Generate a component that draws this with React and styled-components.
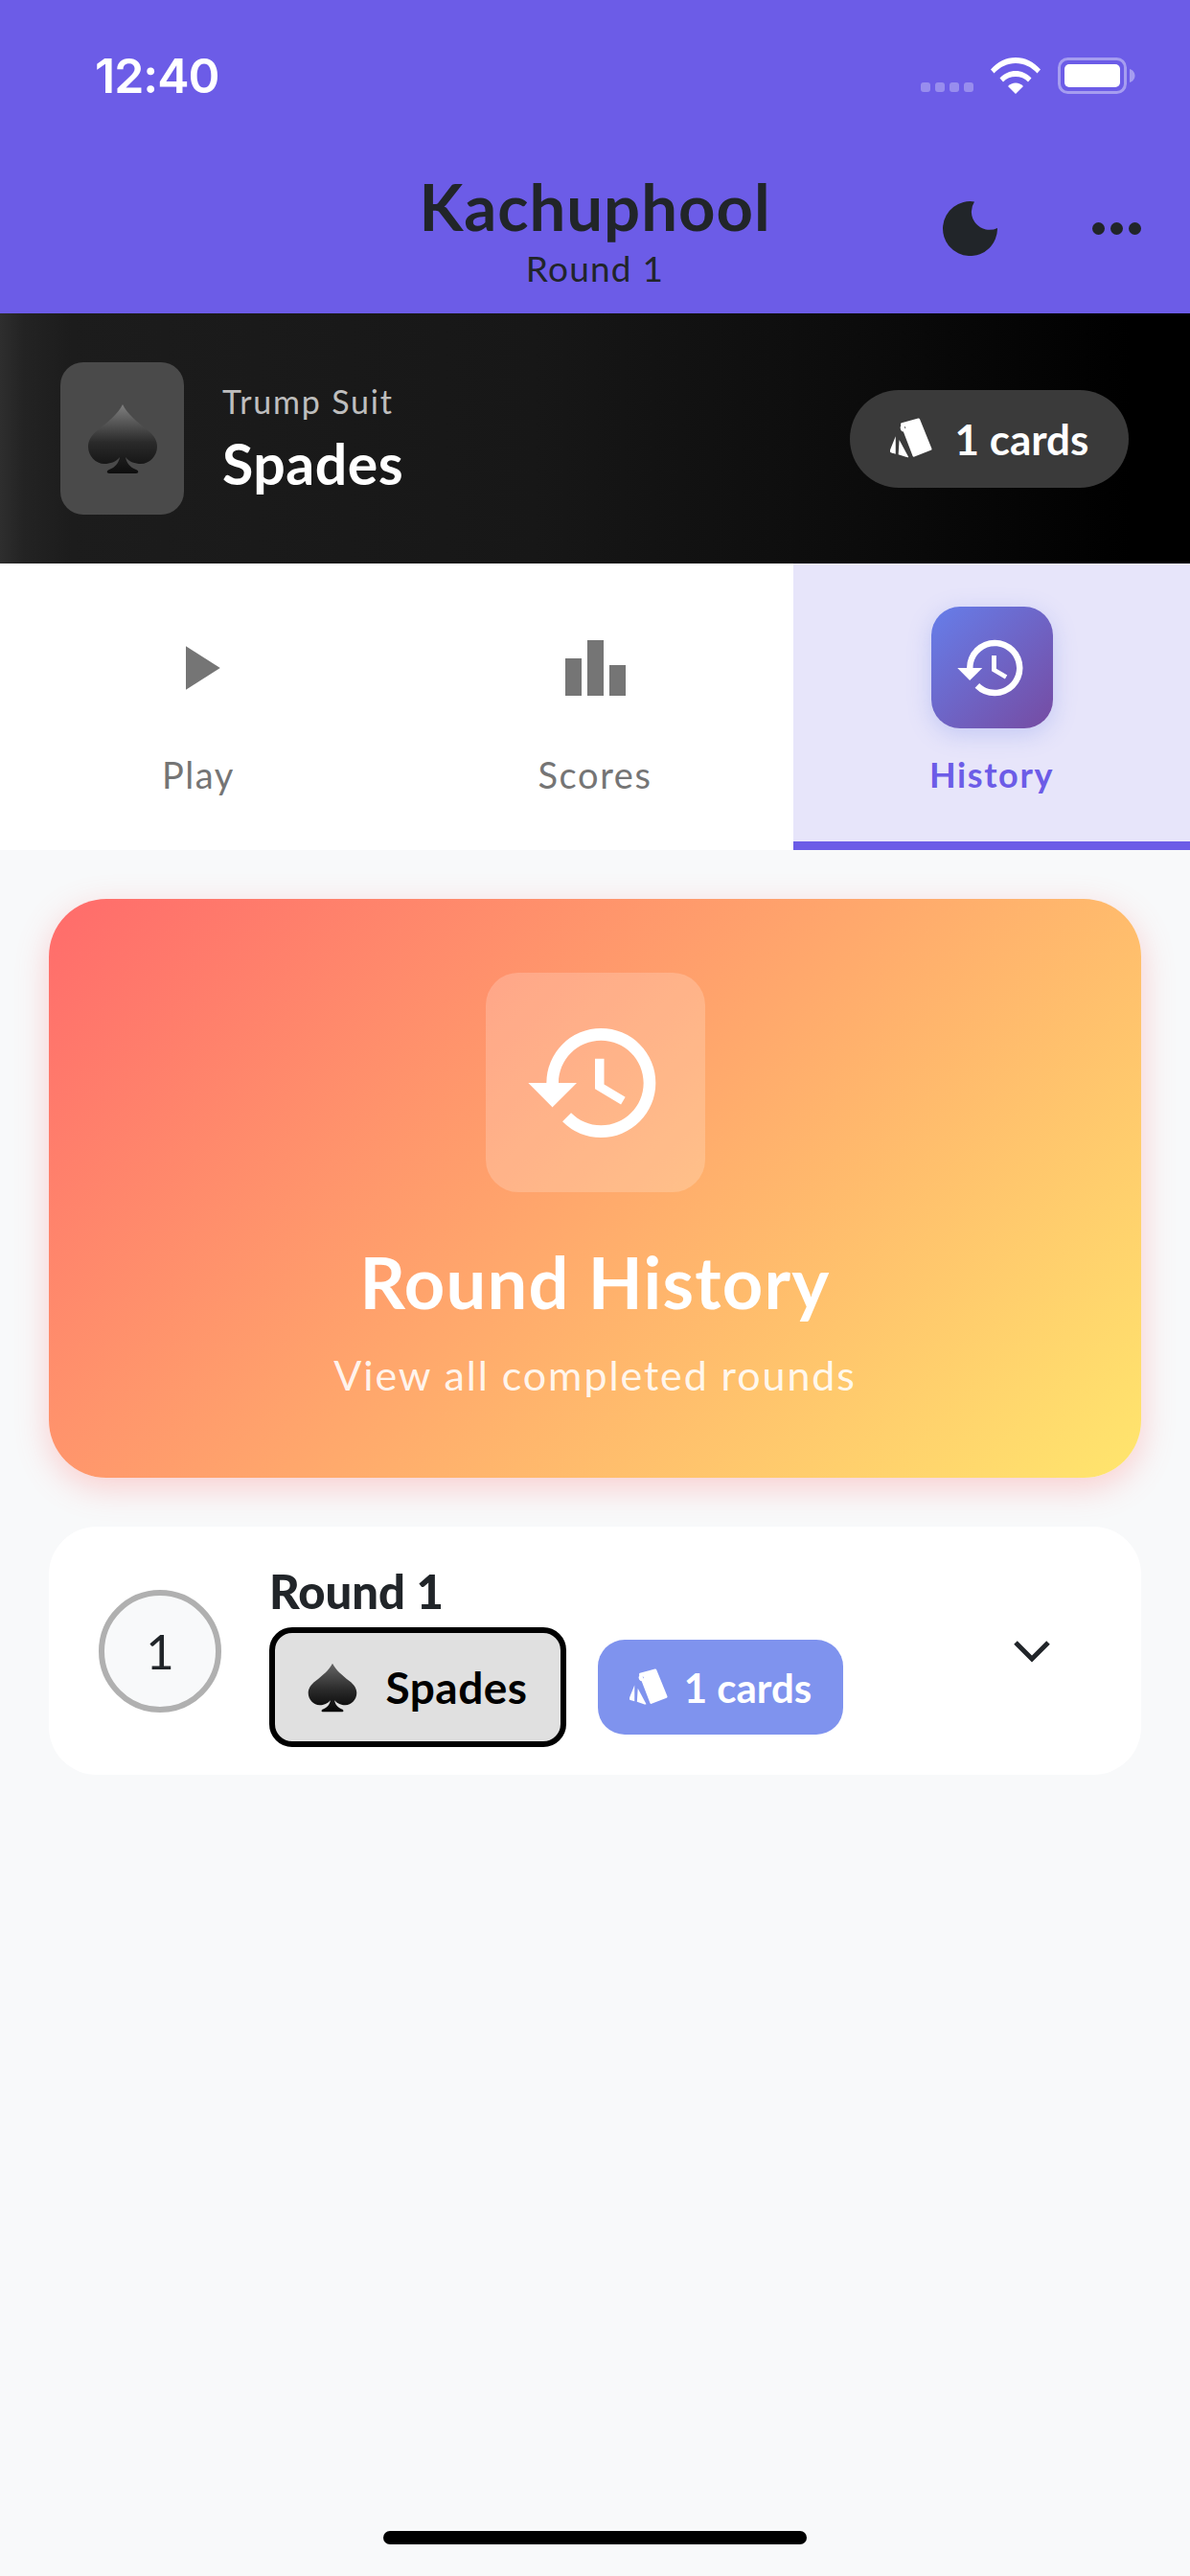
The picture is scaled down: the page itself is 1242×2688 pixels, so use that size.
import React from 'react';
import styled, { createGlobalStyle } from 'styled-components';

const GlobalStyle = createGlobalStyle`
  html, body {
    margin: 0;
    padding: 0;
    background: #f8f9fa;
  }
  * {
    box-sizing: border-box;
  }
`;

const Page = styled.div`
  width: 1242px;
  height: 2688px;
  display: flex;
  flex-direction: column;
  background: #f8f9fa;
  font-family: Lato, "Open Sans", sans-serif;
  overflow: hidden;
`;

const Header = styled.header`
  height: 327px;
  flex-shrink: 0;
  background: #6c5ce7;
`;

const StatusBar = styled.div`
  height: 156px;
  display: flex;
  align-items: center;
  justify-content: space-between;
  padding: 2px 57px 0 99px;
`;

const Time = styled.span`
  font-family: Inter, sans-serif;
  font-size: 50px;
  font-weight: 600;
  letter-spacing: -1px;
  color: #fff;
`;

const StatusIcons = styled.div`
  display: flex;
  align-items: flex-end;
  gap: 18px;
`;

const SignalDots = styled.div`
  display: flex;
  gap: 5px;
  padding-bottom: 2px;
`;

const SignalDot = styled.i`
  display: block;
  width: 10px;
  height: 10px;
  border-radius: 3px;
  background: rgba(255, 255, 255, 0.3);
`;

const AppBar = styled.div`
  height: 171px;
  display: grid;
  grid-template-columns: 1fr auto 1fr;
  align-items: center;
`;

const TitleBlock = styled.div`
  display: flex;
  flex-direction: column;
  align-items: center;
  grid-column: 2;
  margin-top: -6px;
`;

const AppTitle = styled.h1`
  margin: 0;
  font-size: 67px;
  line-height: 72px;
  font-weight: 700;
  letter-spacing: 1px;
  color: #212529;
`;

const AppSubtitle = styled.div`
  margin-top: 10px;
  font-size: 37px;
  line-height: 38px;
  letter-spacing: 1.2px;
  color: #212529;
`;

const HeaderActions = styled.div`
  display: flex;
  align-items: center;
  justify-content: flex-end;
  gap: 99px;
  padding-right: 51px;
  margin-top: -6px;
`;

const MoreDots = styled.div`
  display: flex;
  gap: 6px;
`;

const MoreDot = styled.i`
  display: block;
  width: 13px;
  height: 13px;
  border-radius: 50%;
  background: #212529;
`;

const TrumpBanner = styled.section`
  height: 261px;
  flex-shrink: 0;
  display: flex;
  align-items: center;
  padding: 0 64px 0 63px;
  background: linear-gradient(90deg, #2e2e2e 0%, #232323 2%, #1c1c1c 6%, #171717 45%, #0c0c0c 72%, #000 95%);
`;

const SuitBox = styled.div`
  width: 129px;
  height: 159px;
  display: flex;
  align-items: center;
  justify-content: center;
  border-radius: 24px;
  background: #4a4a4a;
`;

const TrumpText = styled.div`
  display: flex;
  flex-direction: column;
  margin-left: 40px;
  gap: 14px;
`;

const TrumpLabel = styled.span`
  font-size: 34px;
  line-height: 38px;
  letter-spacing: 1.8px;
  color: rgba(255, 255, 255, 0.72);
`;

const TrumpName = styled.span`
  font-size: 59px;
  line-height: 64px;
  font-weight: 700;
  letter-spacing: 0.5px;
  color: #fff;
`;

const CardsPill = styled.div`
  margin-left: auto;
  width: 291px;
  height: 102px;
  display: flex;
  align-items: center;
  justify-content: center;
  gap: 24px;
  border-radius: 51px;
  background: #3a3a3a;
  font-size: 44px;
  font-weight: 700;
  color: #fff;
`;

const Tabs = styled.nav`
  height: 299px;
  flex-shrink: 0;
  display: grid;
  grid-template-columns: repeat(3, 1fr);
  background: #fff;
`;

const Tab = styled.div`
  display: flex;
  flex-direction: column;
  align-items: center;
  padding-top: 45px;
  border-bottom: 9px solid ${props => (props.$active ? '#6c5ce7' : 'transparent')};
  background: ${props => (props.$active ? '#e7e5fa' : 'transparent')};
`;

const TabIcon = styled.div`
  width: 127px;
  height: 127px;
  display: flex;
  align-items: center;
  justify-content: center;
  border-radius: 30px;
  background: ${props => (props.$active ? 'linear-gradient(135deg, #667eea, #764ba2)' : 'transparent')};
  box-shadow: ${props => (props.$active ? '0 6px 24px rgba(102, 126, 234, 0.28)' : 'none')};
`;

const TabLabel = styled.span`
  margin-top: 26px;
  font-size: ${props => (props.$active ? 36 : 38)}px;
  line-height: 44px;
  letter-spacing: 1.6px;
  font-weight: ${props => (props.$active ? 700 : 400)};
  color: ${props => (props.$active ? '#6c5ce7' : '#757575')};
`;

const Content = styled.main`
  display: flex;
  flex-direction: column;
  gap: 51px;
  padding: 51px;
`;

const HeroCard = styled.section`
  height: 604px;
  display: flex;
  flex-direction: column;
  align-items: center;
  padding-top: 77px;
  border-radius: 60px;
  background: linear-gradient(135deg, #ff6b6b 0%, #ffe66d 100%);
  box-shadow: 0 10px 34px rgba(255, 107, 107, 0.3);
`;

const HeroIcon = styled.div`
  width: 229px;
  height: 229px;
  display: flex;
  align-items: center;
  justify-content: center;
  border-radius: 34px;
  background: rgba(255, 255, 255, 0.2);
`;

const HeroTitle = styled.h2`
  margin: 50px 0 0;
  font-size: 74px;
  line-height: 88px;
  font-weight: 700;
  letter-spacing: 1.2px;
  color: #fff;
`;

const HeroSubtitle = styled.p`
  margin: 29px 0 0;
  font-size: 43px;
  line-height: 48px;
  letter-spacing: 1.9px;
  color: rgba(255, 255, 255, 0.9);
`;

const RoundCard = styled.section`
  height: 259px;
  display: flex;
  align-items: center;
  padding-left: 52px;
  border-radius: 50px;
  background: #fff;
`;

const RoundNumber = styled.div`
  width: 128px;
  height: 128px;
  flex-shrink: 0;
  display: flex;
  align-items: center;
  justify-content: center;
  border: 6px solid #b0b0b0;
  border-radius: 50%;
  background: #f8f9fa;
  font-size: 51px;
  color: #212529;
`;

const RoundInfo = styled.div`
  display: flex;
  flex-direction: column;
  margin-left: 50px;
  margin-top: 8px;
`;

const RoundTitle = styled.div`
  font-size: 49px;
  line-height: 60px;
  font-weight: 900;
  color: #212529;
`;

const ChipRow = styled.div`
  display: flex;
  align-items: center;
  gap: 33px;
  margin-top: 8px;
`;

const SuitChip = styled.div`
  width: 310px;
  height: 125px;
  display: flex;
  align-items: center;
  justify-content: center;
  gap: 29px;
  border: 6px solid #000;
  border-radius: 24px;
  background: #e0e0e0;
  font-size: 46px;
  font-weight: 700;
  letter-spacing: 0.5px;
  color: #000;
`;

const CardsChip = styled.div`
  width: 256px;
  height: 99px;
  display: flex;
  align-items: center;
  justify-content: center;
  gap: 17px;
  border-radius: 28px;
  background: #7f93ee;
  font-size: 42px;
  font-weight: 700;
  color: #fff;
`;

const Chevron = styled.div`
  display: flex;
  margin-left: auto;
  margin-right: 95px;
`;

const HomeIndicator = styled.div`
  width: 442px;
  height: 14px;
  flex-shrink: 0;
  margin: auto auto 33px;
  border-radius: 7px;
  background: #000;
`;

const HISTORY_PATH =
  'M13 3a9 9 0 0 0-9 9H1l3.89 3.89.07.14L9 12H6c0-3.87 3.13-7 7-7s7 3.13 7 7-3.13 7-7 7c-1.93 0-3.68-.79-4.94-2.06l-1.42 1.42A8.954 8.954 0 0 0 13 21a9 9 0 0 0 0-18zm-1 5v5l4.28 2.54.72-1.21-3.5-2.08V8H12z';

const HistoryIcon = ({ size }) => (
  <svg width={size} height={size} viewBox="0 0 24 24" fill="#fff">
    <path d={HISTORY_PATH} />
  </svg>
);

const PlayIcon = () => (
  <svg width="78" height="78" viewBox="0 0 24 24" fill="#757575">
    <path d="M8 5v14l11-7z" />
  </svg>
);

const BarsIcon = () => (
  <svg width="63" height="58" viewBox="0 0 63 58" fill="#757575">
    <rect x="0" y="19" width="17" height="39" />
    <rect x="23" y="0" width="17" height="58" />
    <rect x="46" y="26" width="17" height="32" />
  </svg>
);

const SpadeIcon = ({ id, width, top, bottom }) => (
  <svg width={width} height={width} viewBox="0 0 74 74">
    <defs>
      <linearGradient id={id} x1="0" y1="0" x2="0" y2="1">
        <stop offset="0" stopColor={top} />
        <stop offset="0.55" stopColor="#2a2a2a" />
        <stop offset="1" stopColor={bottom} />
      </linearGradient>
    </defs>
    <path
      fill={`url(#${id})`}
      d="M37 1C32 11 22 19 12 27 4 33 1 39 1 45c0 10 8 18 17 18 6 0 12-2 16-7-1 6-5 11-11 13-3 1-3 4 0 4h28c3 0 3-3 0-4-6-2-10-7-11-13 4 5 10 7 16 7 9 0 17-8 17-18 0-6-3-12-11-18C52 19 42 11 37 1z"
    />
  </svg>
);

const CardsIcon = ({ width }) => (
  <svg width={width} viewBox="0 0 46 44" fill="#fff">
    <path
      fillRule="evenodd"
      stroke="#fff"
      strokeWidth="3"
      strokeLinejoin="round"
      d="M13 7 31 2 44 34 26 41zM15.500 8a3 3 0 1 0 .01 0z"
    />
    <path d="M6 20 0 35c-.5 1.500 0 2.500 1 3l5 1.500z" />
    <path d="M10 24 9 40l9 3c1.500.3 2 0 2-.5z" />
  </svg>
);

const MoonIcon = () => (
  <svg width="57" height="57" viewBox="0 0 57 57" fill="#212529">
    <path d="M33 .4A28.500 28.500 0 1 0 57 28 19 19 0 0 1 33 .4z" />
  </svg>
);

const ChevronIcon = () => (
  <svg width="38" height="24" viewBox="0 0 38 24" fill="none" stroke="#212529" strokeWidth="5">
    <path d="M2 3 19 20 36 3" />
  </svg>
);

const WifiIcon = () => (
  <svg width="52" height="38" viewBox="0 0 52 38" fill="#fff">
    <path d="M0 12.500C7 4.500 16 0 26 0s19 4.500 26 12.500l-3.500 4C42 9.500 34.500 6 26 6S10 9.500 3.500 16.500z" />
    <path d="M9.500 21.500C14 16.500 20 14 26 14s12 2.500 16.500 7.500L39 25.500C35.500 21.800 31 20 26 20s-9.500 1.800-13 5.500z" />
    <path d="M18 30c2-2.200 5-3.500 8-3.500s6 1.300 8 3.500l-8 8z" />
  </svg>
);

const BatteryIcon = () => (
  <svg width="81" height="38" viewBox="0 0 81 38">
    <rect x="1.500" y="1.500" width="69" height="35" rx="9" fill="none" stroke="#fff" strokeOpacity="0.4" strokeWidth="3" />
    <rect x="7" y="7" width="58" height="24" rx="5" fill="#fff" />
    <path d="M75 12c3.500 1 5.500 4 5.500 7s-2 6-5.500 7z" fill="#fff" fillOpacity="0.4" />
  </svg>
);

const App = () => (
  <Page>
    <GlobalStyle />
    <Header>
      <StatusBar>
        <Time>12:40</Time>
        <StatusIcons>
          <SignalDots>
            {[0, 1, 2, 3].map(i => (
              <SignalDot key={i} />
            ))}
          </SignalDots>
          <WifiIcon />
          <BatteryIcon />
        </StatusIcons>
      </StatusBar>
      <AppBar>
        <TitleBlock>
          <AppTitle>Kachuphool</AppTitle>
          <AppSubtitle>Round 1</AppSubtitle>
        </TitleBlock>
        <HeaderActions>
          <MoonIcon />
          <MoreDots>
            <MoreDot />
            <MoreDot />
            <MoreDot />
          </MoreDots>
        </HeaderActions>
      </AppBar>
    </Header>

    <TrumpBanner>
      <SuitBox>
        <SpadeIcon id="spade-banner" width={74} top="#808080" bottom="#0e0e0e" />
      </SuitBox>
      <TrumpText>
        <TrumpLabel>Trump Suit</TrumpLabel>
        <TrumpName>Spades</TrumpName>
      </TrumpText>
      <CardsPill>
        <CardsIcon width={44} />
        1 cards
      </CardsPill>
    </TrumpBanner>

    <Tabs>
      <Tab>
        <TabIcon>
          <PlayIcon />
        </TabIcon>
        <TabLabel>Play</TabLabel>
      </Tab>
      <Tab>
        <TabIcon>
          <BarsIcon />
        </TabIcon>
        <TabLabel>Scores</TabLabel>
      </Tab>
      <Tab $active>
        <TabIcon $active>
          <HistoryIcon size={78} />
        </TabIcon>
        <TabLabel $active>History</TabLabel>
      </Tab>
    </Tabs>

    <Content>
      <HeroCard>
        <HeroIcon>
          <HistoryIcon size={152} />
        </HeroIcon>
        <HeroTitle>Round History</HeroTitle>
        <HeroSubtitle>View all completed rounds</HeroSubtitle>
      </HeroCard>

      <RoundCard>
        <RoundNumber>1</RoundNumber>
        <RoundInfo>
          <RoundTitle>Round 1</RoundTitle>
          <ChipRow>
            <SuitChip>
              <SpadeIcon id="spade-chip" width={52} top="#666" bottom="#050505" />
              Spades
            </SuitChip>
            <CardsChip>
              <CardsIcon width={40} />
              1 cards
            </CardsChip>
          </ChipRow>
        </RoundInfo>
        <Chevron>
          <ChevronIcon />
        </Chevron>
      </RoundCard>
    </Content>

    <HomeIndicator />
  </Page>
);

export default App;
